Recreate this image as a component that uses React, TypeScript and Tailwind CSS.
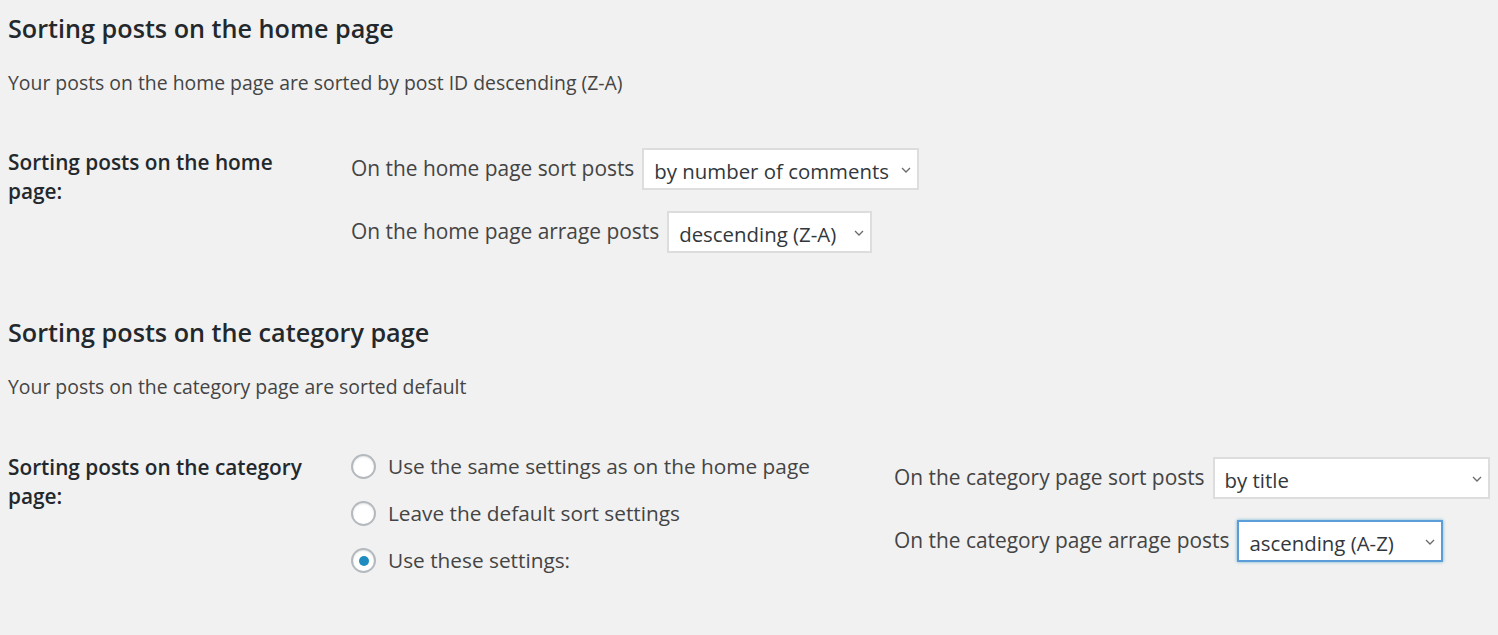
import React from 'react';

const font = { fontFamily: '"Open Sans", "Noto Sans", sans-serif' };

const Chevron: React.FC = () => (
  <svg width="10" height="6" viewBox="0 0 10 6" className="shrink-0 mt-[2px]">
    <path d="M1 1l4 4 4-4" fill="none" stroke="#6b6b6b" strokeWidth="1.3" />
  </svg>
);

const FakeSelect: React.FC<{ value: string; width: string; focused?: boolean }> = ({ value, width, focused }) => (
  <div
    className={`h-[42px] ${width} shrink-0 bg-white flex items-center justify-between pl-[10px] pr-[6px] text-[20.4px] text-[#32373c] ${
      focused ? 'border-2 border-[#5b9dd9] shadow-[0_0_3px_rgba(30,140,190,0.6)]' : 'border-2 border-[#dddddd]'
    }`}
  >
    <span className="whitespace-nowrap pt-[4px]">{value}</span>
    <Chevron />
  </div>
);

const Radio: React.FC<{ label: string; checked?: boolean }> = ({ label, checked }) => (
  <div className="flex items-center gap-[12px] h-[47px]">
    <span className="w-[25px] h-[25px] rounded-full border-2 border-[#b4b9be] bg-white flex items-center justify-center shadow-[inset_0_1px_2px_rgba(0,0,0,0.1)]">
      {checked && <span className="w-[10px] h-[10px] rounded-full bg-[#1e8cbe]" />}
    </span>
    <span className="text-[20.8px] text-[#444]">{label}</span>
  </div>
);

const App: React.FC = () => {
  return (
    <div className="min-h-screen bg-[#f1f1f1] pl-[8px] pt-[10px] text-[#444]" style={font}>
      {/* Home page */}
      <h2 className="text-[25.2px] font-semibold text-[#23282d] leading-[36px]">Sorting posts on the home page</h2>
      <p className="text-[19.4px] mt-[22px] leading-[30px]">Your posts on the home page are sorted by post ID descending (Z-A)</p>

      <div className="flex mt-[45px]">
        <div className="w-[343px] shrink-0 pr-[40px] pt-[5px] text-[20.8px] font-semibold text-[#23282d] leading-[29px]">
          Sorting posts on the home page:
        </div>
        <div className="flex flex-col gap-[21px] pt-[5px]">
          <div className="flex items-center gap-[8px]">
            <span className="text-[20.9px]">On the home page sort posts</span>
            <FakeSelect value="by number of comments" width="w-[277px]" />
          </div>
          <div className="flex items-center gap-[8px]">
            <span className="text-[20.9px]">On the home page arrage posts</span>
            <FakeSelect value="descending (Z-A)" width="w-[205px]" />
          </div>
        </div>
      </div>

      {/* Category page */}
      <h2 className="text-[25.2px] font-semibold text-[#23282d] leading-[36px] mt-[61px]">Sorting posts on the category page</h2>
      <p className="text-[19.4px] mt-[22px] leading-[30px]">Your posts on the category page are sorted default</p>

      <div className="flex mt-[41px]">
        <div className="w-[343px] shrink-0 pr-[40px] pt-[10px] text-[20.8px] font-semibold text-[#23282d] leading-[29px]">
          Sorting posts on the category page:
        </div>
        <div className="w-[543px] shrink-0 flex flex-col">
          <Radio label="Use the same settings as on the home page" />
          <Radio label="Leave the default sort settings" />
          <Radio label="Use these settings:" checked />
        </div>
        <div className="flex flex-col gap-[21px] pt-[14px]">
          <div className="flex items-center gap-[8px]">
            <span className="text-[20.9px]">On the category page sort posts</span>
            <FakeSelect value="by title" width="w-[277px]" />
          </div>
          <div className="flex items-center gap-[8px]">
            <span className="text-[20.9px]">On the category page arrage posts</span>
            <FakeSelect value="ascending (A-Z)" width="w-[206px]" focused />
          </div>
        </div>
      </div>
    </div>
  );
};

export default App;
